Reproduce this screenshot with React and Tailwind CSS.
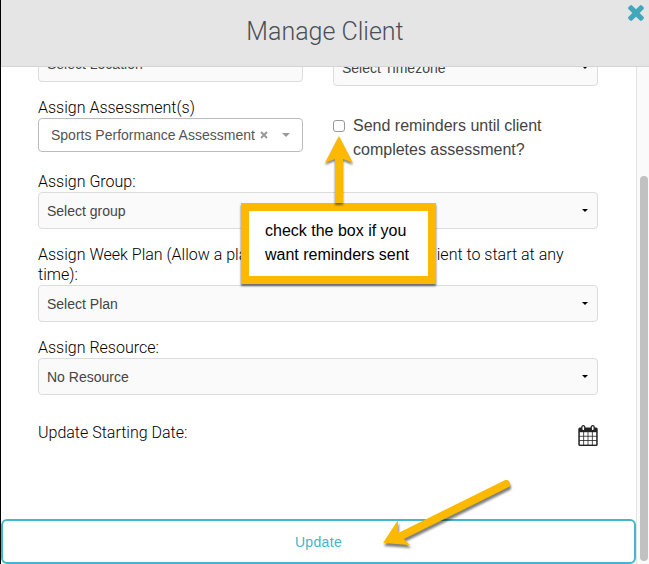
import React, { useState } from "react";

// Small black arrow on the right side of the selects
function Caret() {
  return (
    <svg
      viewBox="0 0 6 3"
      className="pointer-events-none absolute top-[17px] right-2.5 h-[3px] w-1.5"
    >
      <path d="M0 0h6L3 3z" fill="#000" />
    </svg>
  );
}

function SelectBox({ id, label, placeholder, caret = true }) {
  return (
    <div className="relative">
      <select
        id={id}
        aria-label={label}
        className="block h-[37px] w-full appearance-none rounded border border-[#dcdcdc] bg-[#fafafa] px-2 text-sm text-[#444]"
      >
        <option>{placeholder}</option>
      </select>
      {caret && <Caret />}
    </div>
  );
}

function FieldLabel({ htmlFor, children }) {
  return (
    <label
      htmlFor={htmlFor}
      className="block font-['Roboto',sans-serif] text-base leading-5 font-light text-black"
    >
      {children}
    </label>
  );
}

function CalendarIcon() {
  return (
    <svg viewBox="0 0 20 21" className="h-[21px] w-5">
      <rect x="0.3" y="2.6" width="19.4" height="18.4" rx="1.5" fill="#222" />
      <g fill="#fff">
        {[1.8, 6.1, 10.4, 14.7].map((x) =>
          [7.2, 11.6, 16].map((y) => (
            <rect key={x + "-" + y} x={x} y={y} width="3.5" height="3.6" />
          ))
        )}
      </g>
      <rect x="3.8" y="0.7" width="3" height="5" rx="1.5" fill="#fff" stroke="#222" strokeWidth="1.3" />
      <rect x="13.2" y="0.7" width="3" height="5" rx="1.5" fill="#fff" stroke="#222" strokeWidth="1.3" />
    </svg>
  );
}

// Note that points up at the reminders checkbox
function ReminderNote() {
  return (
    <div className="absolute top-[22px] -left-[92px] z-10 flex w-[195px] flex-col items-center">
      <svg viewBox="0 0 32 67" className="h-[67px] w-8 drop-shadow-[0_2px_1px_rgba(0,0,0,0.5)]">
        <path d="M16 0l14 27-10-4v44h-8V23L2 27z" fill="#fcb900" />
      </svg>
      <p className="w-full border-8 border-[#fcb900] bg-white px-4 pt-2 pb-[9px] text-base leading-6 text-black shadow-[0_2px_2px_rgba(0,0,0,0.6)]">
        check the box if you want reminders sent
      </p>
    </div>
  );
}

function UpdateArrow() {
  return (
    <svg
      viewBox="0 0 130 70"
      className="pointer-events-none absolute right-[125px] bottom-4 z-10 h-[70px] w-[130px] drop-shadow-[1px_3px_1px_rgba(0,0,0,0.5)]"
    >
      <path d="M125 6L18 59" stroke="#fcb900" strokeWidth="8" strokeLinecap="round" />
      <path d="M2 65l15-23v11l5 7 7 7z" fill="#fcb900" />
    </svg>
  );
}

function App() {
  const [reminders, setReminders] = useState(false);
  const [assessment, setAssessment] = useState("Sports Performance Assessment");

  return (
    <div className="flex h-screen flex-col overflow-hidden bg-black pl-px font-['Liberation_Sans',Arial,sans-serif]">
      <header className="relative shrink-0 border-b border-[#d4d4d4] bg-[#e5e5e5] pt-3 pb-[14px] text-center">
        <h1 className="font-['Roboto',sans-serif] text-[25px] leading-10 font-light text-[#4a4f57]">
          Manage Client
        </h1>
        <button aria-label="Close" className="absolute top-[5px] right-[5px]">
          <svg viewBox="110 366 1188 1188" className="size-4">
            <path
              fill="#43a7bb"
              d="M1298 1322q0 40-28 68l-136 136q-28 28-68 28t-68-28l-294-294-294 294q-28 28-68 28t-68-28l-136-136q-28-28-28-68t28-68l294-294-294-294q-28-28-28-68t28-68l136-136q28-28 68-28t68 28l294 294 294-294q28-28 68-28t68 28l136 136q28 28 28 68t-28 68l-294 294 294 294q28 28 28 68z"
            />
          </svg>
        </button>
      </header>

      <div className="flex min-h-0 flex-1 overflow-hidden">
        <form
          onSubmit={(e) => e.preventDefault()}
          className="relative flex flex-1 flex-col justify-end overflow-hidden bg-white"
        >
          <div className="flex shrink-0 flex-col gap-4 pr-[38px] pl-[37px]">
            <div className="-mb-1.5 grid grid-cols-2 gap-[30px]">
              <div>
                <SelectBox
                  id="location"
                  label="Location"
                  placeholder="Select Location"
                  caret={false}
                />
                <div className="mt-4">
                  <FieldLabel htmlFor="assessment">Assign Assessment(s)</FieldLabel>
                  <div className="flex h-[34px] items-center rounded border border-[#bbb] bg-white px-3 text-sm text-[#555]">
                    <button type="button" id="assessment" className="flex-1 text-left whitespace-nowrap">
                      {assessment}
                    </button>
                    <button
                      type="button"
                      aria-label="Clear assessment"
                      onClick={() => setAssessment("")}
                      className="mr-3.5"
                    >
                      <svg viewBox="0 0 8 8" className="size-2">
                        <path d="M1 1l6 6M7 1L1 7" stroke="#999" strokeWidth="2" />
                      </svg>
                    </button>
                    <svg viewBox="0 0 8 4" className="h-1 w-2">
                      <path d="M0 0h8L4 4z" fill="#999" />
                    </svg>
                  </div>
                </div>
              </div>

              <div className="pt-1">
                <SelectBox id="timezone" label="Timezone" placeholder="Select Timezone" />
                <div className="relative mt-7 flex items-start gap-2">
                  <input
                    id="reminders"
                    type="checkbox"
                    checked={reminders}
                    onChange={(e) => setReminders(e.target.checked)}
                    className="mt-1.5 size-3 shrink-0 appearance-none rounded-[3px] border border-[#999] bg-white checked:bg-[#45b5cb]"
                  />
                  <label htmlFor="reminders" className="text-base leading-6 text-[#444]">
                    Send reminders until client completes assessment?
                  </label>
                  <ReminderNote />
                </div>
              </div>
            </div>

            <div>
              <FieldLabel htmlFor="group">Assign Group:</FieldLabel>
              <SelectBox id="group" placeholder="Select group" />
            </div>

            <div>
              <FieldLabel htmlFor="plan">
                Assign Week Plan (Allow a plan to be assigned to every client to start at any time):
              </FieldLabel>
              <SelectBox id="plan" placeholder="Select Plan" />
            </div>

            <div>
              <FieldLabel htmlFor="resource">Assign Resource:</FieldLabel>
              <SelectBox id="resource" placeholder="No Resource" />
            </div>

            <div className="mt-3 mb-[73px] flex items-start justify-between">
              <FieldLabel htmlFor="start-date">Update Starting Date:</FieldLabel>
              <button
                type="button"
                id="start-date"
                className="mt-0.5"
              >
                <CalendarIcon />
              </button>
            </div>
          </div>

          <button
            type="submit"
            className="block h-[45px] w-full shrink-0 rounded-md border-2 border-[#45b5cb] bg-white text-sm tracking-wide text-[#45b5cb]"
          >
            Update
          </button>
          <UpdateArrow />
        </form>

        {/* Scrollbar */}
        <div className="flex w-[13px] flex-col border-l border-[#e4e4e4] bg-[#fafafa] pt-[109px] pr-px pb-[3px] pl-[3px]">
          <div className="flex-1 rounded-full bg-[#c1c1c1]" />
        </div>
      </div>
    </div>
  );
}

export default App;
